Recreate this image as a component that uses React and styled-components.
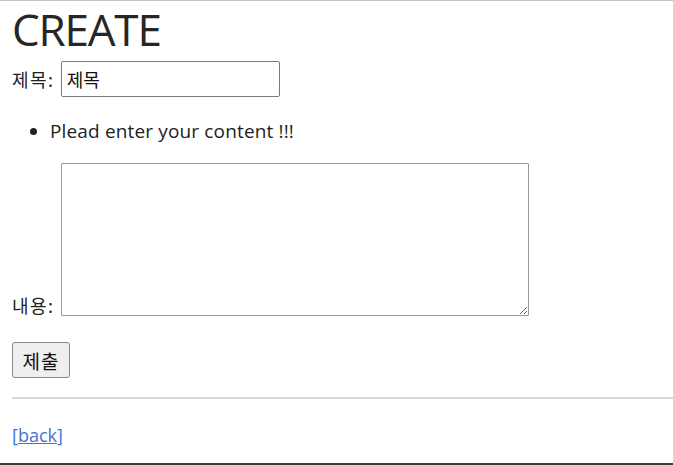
import styled, { createGlobalStyle } from "styled-components";

const GlobalStyle = createGlobalStyle`
  html, body {
    margin: 0;
    padding: 0;
    background: #fff;
  }
  body {
    font-family: "Open Sans", "Noto Sans CJK KR", sans-serif;
    color: #1f1f1f;
  }
`;

const Frame = styled.div`
  box-sizing: border-box;
  width: 673px;
  height: 465px;
  overflow: hidden;
  border-top: 1px solid #c4c4c4;
  border-bottom: 2px solid #3a3a3a;
  padding: 0 0 0 12px;
`;

const Title = styled.h1`
  margin: 0;
  height: 56px;
  font-size: 44px;
  font-weight: 400;
  line-height: 56px;
  letter-spacing: -1.2px;
  color: #262626;
`;

const Form = styled.form`
  display: flex;
  flex-direction: column;
`;

const Row = styled.div`
  display: flex;
  align-items: ${(props) => props.$align || "baseline"};
  gap: 6px;
  font-size: 19px;
  margin-top: ${(props) => props.$top || 0}px;
`;

const Label = styled.span`
  font-family: "Noto Sans CJK KR", sans-serif;
  font-size: 18px;
  line-height: 22px;
  letter-spacing: 1.5px;
  color: #222;
`;

const TextInput = styled.input`
  box-sizing: border-box;
  width: 219px;
  height: 36px;
  padding: 0 5px;
  border: 1px solid #7a7a7a;
  border-radius: 2px;
  font-family: "Noto Sans CJK KR", sans-serif;
  font-size: 18px;
  color: #111;
  outline: none;
`;

const Notes = styled.ul`
  margin: 20px 0 0;
  padding-left: 38px;
  font-size: 19px;
  line-height: 28px;
  letter-spacing: 0.15px;
  color: #222;
`;

const TextArea = styled.textarea`
  box-sizing: border-box;
  width: 468px;
  height: 153px;
  border: 1px solid #9a9a9a;
  border-radius: 1px;
  margin: 0;
  resize: both;
  outline: none;
`;

const SubmitButton = styled.button`
  box-sizing: border-box;
  width: 58px;
  height: 36px;
  padding: 0;
  background: #efefef;
  border: 1px solid #8a8a8a;
  border-radius: 3px;
  font-family: "Noto Sans CJK KR", sans-serif;
  font-size: 19px;
  letter-spacing: 1px;
  color: #111;
`;

const Rule = styled.hr`
  margin: 19px 0 0;
  border: 0;
  border-top: 2px solid #dadada;
`;

const BackLink = styled.a`
  display: inline-block;
  margin-top: 24px;
  font-size: 18px;
  line-height: 24px;
  color: #3f74d4;
  text-decoration: none;

  span {
    text-decoration: underline;
  }
`;

export default function App() {
  return (
    <>
      <GlobalStyle />
      <Frame>
        <Title>CREATE</Title>
        <Form onSubmit={(e) => e.preventDefault()}>
          <Row $top={4}>
            <Label>제목:</Label>
            <TextInput type="text" defaultValue="제목" />
          </Row>
          <Notes>
            <li>Plead enter your content !!!</li>
          </Notes>
          <Row $align="flex-end" $top={18}>
            <Label>내용:</Label>
            <TextArea />
          </Row>
          <Row $top={26}>
            <SubmitButton type="submit">제출</SubmitButton>
          </Row>
        </Form>
        <Rule />
        <BackLink href="#">
          [<span>back</span>]
        </BackLink>
      </Frame>
    </>
  );
}
